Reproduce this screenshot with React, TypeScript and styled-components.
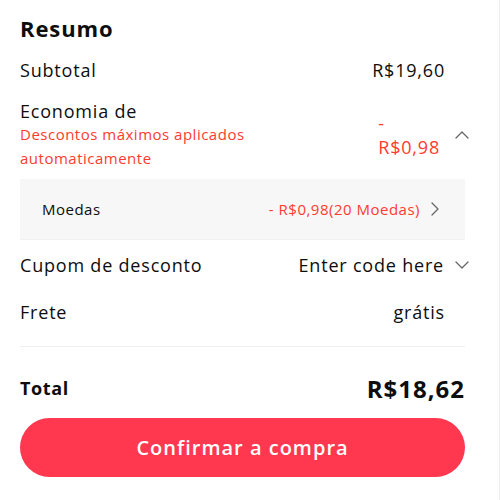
import React from 'react';
import styled, { createGlobalStyle } from 'styled-components';

const GlobalStyle = createGlobalStyle`
  html, body {
    margin: 0;
    padding: 0;
    background: #fff;
  }
  body {
    font-family: "Open Sans", "Noto Sans", sans-serif;
    color: #0d0d0d;
    border-right: 1px solid #eee;
    min-height: 500px;
    box-sizing: border-box;
  }
`;

const Panel = styled.div`
  padding: 12px 34px 0 20px;
  display: flex;
  flex-direction: column;
`;

const Title = styled.h2`
  margin: 0;
  font-size: 22px;
  font-weight: 700;
  line-height: 32px;
  letter-spacing: 0.9px;
`;

const Row = styled.div<{ $h: number }>`
  display: flex;
  align-items: center;
  justify-content: space-between;
  height: ${(p) => p.$h}px;
  font-size: 18px;
  font-weight: 500;
  letter-spacing: 0.8px;
`;

const DiscountRow = styled.div`
  display: flex;
  align-items: center;
  justify-content: space-between;
  padding-top: 4px;
  font-size: 18px;
  font-weight: 500;
  letter-spacing: 0.8px;
`;

const Label = styled.div`
  display: flex;
  flex-direction: column;
  line-height: 22px;
`;

const Note = styled.span`
  color: #ff3b2f;
  font-size: 15px;
  font-weight: 400;
  line-height: 24px;
  letter-spacing: 0.5px;
`;

const Value = styled.span`
  padding-right: 20px;
`;

const Wrapped = styled.span`
  width: min-content;
  line-height: 24px;
  color: #ff3b2f;
`;

const Side = styled.div<{ $gap: number }>`
  display: flex;
  align-items: center;
  gap: ${(p) => p.$gap}px;
  margin-right: -4px;
`;

const Sub = styled.div`
  background: #f7f7f7;
  height: 61px;
  margin-top: 9px;
  padding: 0 25px 0 22px;
  display: flex;
  align-items: center;
  justify-content: space-between;
  font-size: 15px;
  letter-spacing: 0.5px;
  border-bottom: 1px solid #f0f0f0;
  box-sizing: border-box;
`;

const SubValue = styled.span`
  color: #ff3b2f;
  display: flex;
  align-items: center;
  gap: 10px;
`;

const Divider = styled.hr`
  border: none;
  border-top: 1px solid #eeeeee;
  margin: 12px 0 0;
`;

const TotalRow = styled.div`
  display: flex;
  align-items: center;
  justify-content: space-between;
  height: 60px;
  padding-top: 11px;
  font-size: 18px;
  font-weight: 700;
  letter-spacing: 0.6px;
`;

const TotalValue = styled.span`
  font-size: 24px;
  font-weight: 700;
  letter-spacing: 1px;
`;

const Confirm = styled.button`
  height: 59px;
  border: none;
  border-radius: 30px;
  background: #ff374f;
  color: #fff;
  font-family: "Open Sans", "Noto Sans", sans-serif;
  font-size: 20px;
  font-weight: 600;
  letter-spacing: 1px;
`;

const paths = {
  up: 'M1 8 L7 2 L13 8',
  down: 'M1 2 L7 8 L13 2',
  right: 'M2 1 L8 7 L2 13',
};

const Chevron = ({ dir }: { dir: keyof typeof paths }) => {
  const w = dir === 'right' ? 10 : 14;
  const h = dir === 'right' ? 14 : 10;
  return (
    <svg width={w} height={h} viewBox={`0 0 ${w} ${h}`} fill="none">
      <path d={paths[dir]} stroke="#666" strokeWidth="1.3" strokeLinecap="round" strokeLinejoin="round" />
    </svg>
  );
};

export default function App() {
  return (
    <>
      <GlobalStyle />
      <Panel>
        <Title>Resumo</Title>
        <Row $h={52}>
          <span>Subtotal</span>
          <Value>R$19,60</Value>
        </Row>
        <DiscountRow>
          <Label>
            <span>Economia de</span>
            <Note>Descontos máximos aplicados</Note>
            <Note>automaticamente</Note>
          </Label>
          <Side $gap={15}>
            <Wrapped>- R$0,98</Wrapped>
            <Chevron dir="up" />
          </Side>
        </DiscountRow>
        <Sub>
          <span>Moedas</span>
          <SubValue>
            - R$0,98(20 Moedas) <Chevron dir="right" />
          </SubValue>
        </Sub>
        <Row $h={50}>
          <span>Cupom de desconto</span>
          <Side $gap={11}>
            <span>Enter code here</span>
            <Chevron dir="down" />
          </Side>
        </Row>
        <Row $h={44}>
          <span>Frete</span>
          <Value>grátis</Value>
        </Row>
        <Divider />
        <TotalRow>
          <span>Total</span>
          <TotalValue>R$18,62</TotalValue>
        </TotalRow>
        <Confirm>Confirmar a compra</Confirm>
      </Panel>
    </>
  );
}
